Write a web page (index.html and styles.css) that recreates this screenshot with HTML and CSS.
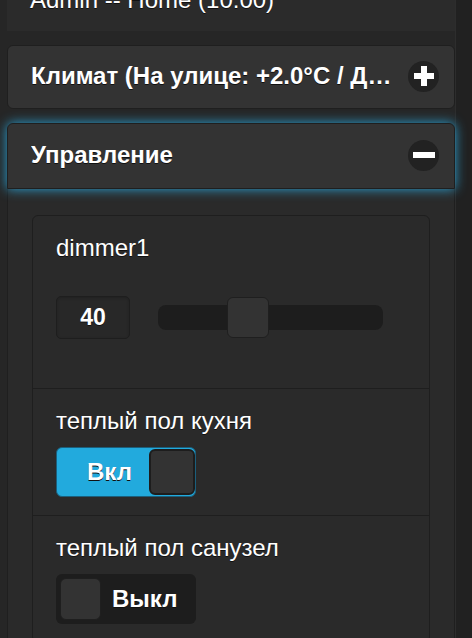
FILE: index.html
```html
<!DOCTYPE html>
<html lang="ru">
<head>
  <meta charset="UTF-8">
  <title>Admin -- Home</title>
  <meta name="viewport" content="width=device-width, initial-scale=1.0">
  <link rel="stylesheet" href="styles.css">
</head>
<body>

  <div class="screen">
    <div class="main">

      <div class="topbar">
        <div class="topbar-title">Admin -- Home (10:00)</div>
      </div>

      <div class="collapsible">
        <h3 class="coll-head">
          <span class="coll-title">Климат (На улице: +2.0°C / Давление 752 мм)</span>
          <span class="coll-icon">
            <svg width="20" height="20" viewBox="0 0 20 20"><path d="M7 0h6v7h7v6h-7v7H7v-7H0V7h7z" fill="#fff"/></svg>
          </span>
        </h3>
      </div>

      <div class="collapsible open">
        <h3 class="coll-head focused">
          <span class="coll-title">Управление</span>
          <span class="coll-icon">
            <svg width="22" height="20" viewBox="0 0 22 20"><rect x="0" y="7" width="22" height="6" fill="#fff"/></svg>
          </span>
        </h3>

        <div class="coll-body">
          <ul class="list">
            <li class="item">
              <label class="item-label">dimmer1</label>
              <div class="slider">
                <input class="slider-value" type="text" value="40">
                <div class="track">
                  <span class="handle" style="left: calc(40% - 21px)"></span>
                </div>
              </div>
            </li>

            <li class="item">
              <label class="item-label">теплый пол кухня</label>
              <div class="switch on">
                <span class="switch-text">Вкл</span>
                <span class="switch-handle"></span>
              </div>
            </li>

            <li class="item">
              <label class="item-label">теплый пол санузел</label>
              <div class="switch off">
                <span class="switch-handle"></span>
                <span class="switch-text">Выкл</span>
              </div>
            </li>
          </ul>
        </div>
      </div>

    </div>
    <div class="rail"></div>
  </div>

</body>
</html>
```

FILE: styles.css
```css
body {
  margin: 0;
  background-color: #252525;
  color: #fff;
  font-family: "Liberation Sans", Arial, sans-serif;
  font-size: 24px;
  line-height: 30px;
  text-shadow: 0 1px 0 #111;
}

.screen {
  display: flex;
  height: 638px;
  overflow: hidden;
}

.main {
  width: 448px;
  padding-left: 7px;
  background-color: #262626;
}

.rail {
  flex: 1;
  background-color: #212121;
  border-left: 1px solid #2d2d2d;
}

.topbar {
  height: 31px;
  overflow: hidden;
  background-color: #2b2b2b;
  padding-left: 23px;
}

.topbar-title {
  margin-top: -15px;
  white-space: nowrap;
}

.collapsible {
  margin-top: 14px;
}

.coll-head {
  display: flex;
  align-items: center;
  margin: 0;
  padding: 15px 15px 17px 23px;
  background-color: #333;
  border: 1px solid #1f1f1f;
  border-radius: 6px;
  font-size: 24px;
  font-weight: bold;
}

.coll-head.focused {
  position: relative;
  z-index: 1;
  padding-top: 16px;
  padding-bottom: 18px;
  border-radius: 6px 6px 0 0;
  box-shadow: 0 0 12px #2aa3d6;
}

.coll-title {
  flex: 1;
  min-width: 0;
  overflow: hidden;
  white-space: nowrap;
  text-overflow: ellipsis;
  margin-right: 8px;
}

.coll-icon {
  width: 31px;
  height: 31px;
  margin: -1px 0;
  flex-shrink: 0;
  border-radius: 50%;
  background-color: #222;
  display: flex;
  align-items: center;
  justify-content: center;
}

.coll-icon svg {
  display: block;
}

.coll-body {
  background-color: #2a2a2a;
  border: 1px solid #1f1f1f;
  border-top: none;
  padding: 26px 24px 40px;
}

.list {
  list-style: none;
  margin: 0;
  padding: 0;
  border: 1px solid #1e1e1e;
  border-radius: 6px;
  background-color: #2a2a2a;
}

.item {
  padding: 17px 23px 18px;
  border-top: 1px solid #1e1e1e;
}

.item:first-child {
  border-top: none;
  padding-bottom: 49px;
}

.item-label {
  display: block;
  white-space: nowrap;
}

.slider {
  display: flex;
  align-items: center;
  margin-top: 33px;
}

.slider-value {
  width: 74px;
  height: 43px;
  box-sizing: border-box;
  padding: 0;
  margin: 0;
  background-color: #282828;
  border: 1px solid #1e1e1e;
  border-radius: 5px;
  box-shadow: inset 0 1px 3px rgba(0, 0, 0, 0.2);
  color: #fff;
  text-shadow: 0 1px 0 #111;
  font-family: "Liberation Sans", Arial, sans-serif;
  font-size: 23px;
  font-weight: bold;
  text-align: center;
}

.track {
  position: relative;
  width: 225px;
  height: 25px;
  margin-left: 28px;
  background-color: #1d1d1d;
  border-radius: 8px;
}

.handle {
  position: absolute;
  top: -8px;
  width: 42px;
  height: 41px;
  box-sizing: border-box;
  background-color: #333;
  border: 1px solid #1f1f1f;
  border-radius: 6px;
}

.switch {
  display: flex;
  align-items: center;
  width: 140px;
  height: 50px;
  box-sizing: border-box;
  margin-top: 11px;
  border-radius: 6px;
  font-weight: bold;
}

.switch.on {
  background-color: #22aadd;
  border: 1px solid #1b5f7c;
  padding-left: 30px;
}

.switch.on .switch-handle {
  margin-left: auto;
  margin-right: 0;
  width: 46px;
  height: 46px;
  border: 2px solid #1d1d1d;
}

.switch.off {
  background-color: #1d1d1d;
  padding-left: 4px;
}

.switch.off .switch-text {
  margin-left: 11px;
}

.switch-handle {
  width: 41px;
  height: 42px;
  box-sizing: border-box;
  background-color: #333;
  border: 1px solid #1f1f1f;
  border-radius: 6px;
}
```
